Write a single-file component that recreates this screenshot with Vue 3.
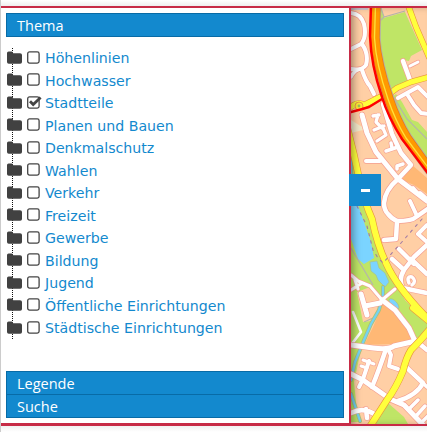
<script setup>
import { ref } from 'vue'

const layers = ref([
  'Höhenlinien', 'Hochwasser', 'Stadtteile', 'Planen und Bauen', 'Denkmalschutz',
  'Wahlen', 'Verkehr', 'Freizeit', 'Gewerbe', 'Bildung', 'Jugend',
  'Öffentliche Einrichtungen', 'Städtische Einrichtungen',
].map((name) => ({ name, checked: name === 'Stadtteile' })))

// Residential streets: path and carriageway width
const streets = [
  ['M351 13 Q361 14 364 24 Q367 37 361 44 L351 49', 4],
  ['M362 44 Q369 54 366 65 Q362 71 351 69', 4],
  ['M362 70 Q366 82 370 86 L374 94', 4],
  ['M351 77 Q355 69 361 69', 3.5],
  ['M403 61 L410 80', 4.5],
  ['M410 66 L418 62', 3],
  ['M398 98 L407 93 L418 87 L429 98', 4],
  ['M407 94 L414 105 L421 113 L429 114', 4],
  ['M362 115 L367 133 L376 152 L398 179 L427 201', 5],
  ['M366 161 L380 161', 4],
  ['M373 116 L379 115 M378 115 L376 122 L382 128 M374 130 L384 126 M382 126 L386 135 L377 141', 3.3],
  ['M383 104 L392 134 L401 153 L411 165 L398 179 Q385 190 384 203 Q384 210 388 214 Q392 219 397 221 L396 239 L384 240', 4.5],
  ['M386 151 L398 147 M391 143 L392 148 M397 169 V166 L403 164', 3.5],
  ['M397 221 Q412 221 416 217 L429 208', 4.5],
  ['M417 216 L410 201 M417 193 L413 188 M420 193 L429 201 M427 225 L418 234 L427 242', 4],
  ['M399 249 L414 264 M392 259 L404 270 L414 257 L427 245 M411 259 L427 274 M404 270 Q398 280 403 288 L427 293', 4.5],
  ['M409 283 Q406 276 412 277 Q417 281 412 285', 3.5],
  ['M382 300 L395 310 L409 328 L414 339', 5],
  ['M351 275 L358 281 L370 286 L382 300 L395 289', 3],
  ['M351 290 L362 283 M355 280 L358 289', 3],
  ['M361 294 L367 315 M365 306 L380 303', 5],
  ['M351 345 L373 348 Q389 350 394 346 L416 341', 5],
  ['M386 349 Q379 370 372 387', 4.5],
  ['M388 349 L391 355 L389 366 L398 369', 4],
  ['M416 341 L427 350', 4.5],
  ['M351 374 L363 380 L390 399 L404 405 L427 429', 5],
  ['M398 401 Q417 395 423 383 L406 367', 4.5],
  ['M423 383 L427 387 M409 409 L418 400 M416 416 L425 406 M422 422 L429 415', 3.5],
  ['M369 361 L363 379 L359 387', 4],
  ['M361 366 L367 368 M363 360 L374 364', 3],
  ['M351 413 Q364 406 377 416 M366 409 L367 418', 4.5],
]

// Footways through the green belt
const footways = 'M353 312 L361 332 L351 345'

const yellowRoads = [
  ['M408 5 L416 27 L429 57', 5],
  ['M384 98 L397 88 L411 82 L429 77', 5],
  ['M351 107 Q358 101 364 105 L380 97', 5],
  ['M347 127 Q354 153 359 178 Q364 201 372 219 Q377 244 386 263 Q397 288 429 320', 6],
  ['M413 308 L429 321 M429 330 Q421 340 411 350 Q406 358 403 371 Q396 388 387 400 L369 428', 6],
]

const toggle = (layer) => { layer.checked = !layer.checked }
</script>

<template>
  <main class="viewer">
    <div class="strip" />
    <div class="frame">
      <section class="panel">
        <h2 class="bar">Thema</h2>
        <ul class="tree">
          <li v-for="layer in layers" :key="layer.name" class="row" @click="toggle(layer)">
            <svg class="folder" viewBox="0 0 15 13">
              <path d="M0 2Q0 .4 1.6 .4H4.6Q6 .4 6.2 2.2H13Q15 2.2 15 4V11Q15 12.7 13.2 12.7H1.8Q0 12.7 0 11Z" />
            </svg>
            <svg class="check" viewBox="0 0 15 13">
              <rect x=".7" y=".9" width="11.4" height="11.2" rx="1.8" />
              <path v-if="layer.checked" d="M3 5.2 6.2 8.5 13.6 1.5" />
            </svg>
            <span>{{ layer.name }}</span>
          </li>
        </ul>
        <div class="lower">
          <h2 class="bar">Legende</h2>
          <h2 class="bar">Suche</h2>
        </div>
      </section>
      <section class="map">
        <svg class="canvas" viewBox="351 8 76 416">
          <rect x="351" y="8" width="76" height="416" fill="#ffcfa5" />
          <path d="M351 8H368V10H351Z" fill="#cfc5cc" />
          <g fill="#bfe566">
            <path d="M379 8H381L384 17L380 23Z" />
            <path d="M380 19L405 12L422 50L411 56L409 61L402 60L411 82L390 92L379 60Z" />
            <path d="M391 98L396 94L402 102L412 120L418 122L427 132V158L407 138L396 117Z" />
            <path d="M351 143L357 168L364 202L374 228L382 260L405 300L427 322V333L415 339L400 319L386 301L372 320L362 345L354 382L358 422H351Z" />
            <path d="M398 312H427V330L415 339L406 326Z" />
            <path d="M388 403L404 417L408 424H373Z" />
          </g>
          <path d="M351 120L362 127L363 130L351 133Z" fill="#f2e8c8" />
          <path d="M357 292L370 287L382 301L378 312L371 321L363 322Z" fill="#ffcfa5" />
          <path d="M411 164L427 178V194L414 185L402 180Z M383 303L393 311L410 330L414 339L394 344L364 345L373 327Z" fill="#ffb875" />
          <path d="M351 206L358 205L364 222L371 242L374 258L364 264L358 259L351 239Z" fill="#7bd4ff" />
          <g fill="#7bd4ff" stroke="#a9bd88" stroke-width=".6">
            <path d="M370 262L377 261L379 268L385 273L389 282L385 287L378 280L376 275L371 271Z" />
            <ellipse cx="394" cy="304" rx="3" ry="6.5" transform="rotate(-42 394 304)" />
          </g>
          <g fill="none" stroke="#b5b5aa" stroke-width="1.2">
            <path d="M405 11L384 17L381 8M384 17L380 21V44L384 68L393 96L407 119L427 139M351 248L373 285M364 322L373 318" />
          </g>
          <path class="line brook-edge" d="M383 287V295L379 310L371 324L364 340L355 362L351 380M351 394L360 421M351 160V183" />
          <path class="line brook" d="M383 287V295L379 310L371 324L364 340L355 362L351 380M351 394L360 421M351 160V183" />
          <path class="line surface" :d="footways" stroke-width="2.6" />
          <g class="line casing">
            <path v-for="([d, width], i) in streets" :key="i" :d="d" :stroke-width="width + 1.3" />
          </g>
          <g class="line surface">
            <path v-for="([d, width], i) in streets" :key="i" :d="d" :stroke-width="width" />
          </g>
          <g class="line yellow-casing">
            <path v-for="([d, width], i) in yellowRoads" :key="i" :d="d" :stroke-width="width + 1.2" />
          </g>
          <g class="line yellow">
            <path v-for="([d, width], i) in yellowRoads" :key="i" :d="d" :stroke-width="width" />
          </g>
          <circle cx="359" cy="106" r="4" fill="#ffec38" stroke="#ef9a49" />
          <circle cx="359" cy="106" r="1.4" fill="#a4bf55" />
          <path class="line" d="M376 5L375 38Q377 64 389 99Q396 120 407 138L430 170" stroke="#b7b1a3" stroke-width="11" />
          <path class="line" d="M376 5L375 38Q377 64 389 99Q396 120 407 138L430 170" stroke="#e77b16" stroke-width="9.4" />
          <path class="line" d="M376 5L375 38Q377 64 389 99Q396 120 407 138L430 170" stroke="#ff9900" stroke-width="8" />
          <path class="line" d="M375.5 5L374.5 38Q376 64 388 99Q395 120 406 138L430 170" stroke="#ffe13a" stroke-width="1.3" />
          <path class="line" d="M371 5L370 36Q371 65 382 97Q388 117 402 139L430 176M351 112Q363 109 369 107L382 99" stroke="#f00" stroke-width="2.5" />
          <path class="line" d="M357 206L367 226L373 250L378 258L383 263L401 243L422 219M351 183L357 204" stroke="#a27ba5" stroke-width="1.1" stroke-dasharray="2.5 5" />
        </svg>
        <button class="zoom-out" aria-label="−"><i /></button>
      </section>
    </div>
    <div class="foot" />
  </main>
</template>

<style>
body { margin: 0; background: #fff; }
</style>

<style scoped>
.viewer {
  box-sizing: border-box;
  width: 427px;
  height: 432px;
  border-left: 1px solid #ccc;
  display: flex;
  flex-direction: column;
  overflow: hidden;
  background: #fff;
}
.strip {
  height: 6px;
  flex: none;
  background: linear-gradient(#fff, #eee);
}
.frame {
  height: 420px;
  box-sizing: border-box;
  display: flex;
  border-top: 2px solid #c72b46;
  border-bottom: 2px solid #c72b46;
}
.foot {
  height: 6px;
  background: linear-gradient(#f1f1f1, #fff);
}
.panel {
  box-sizing: border-box;
  width: 350px;
  padding: 5px 5px 5px;
  border-right: 2px solid #c72b46;
  border-bottom: 1px solid #c72b46;
  display: flex;
  flex-direction: column;
}
.bar {
  box-sizing: border-box;
  flex: none;
  height: 24px;
  margin: 0;
  padding-left: 10px;
  border: 1px solid #086ba6;
  background: #1389ce;
  color: #fff;
  font: 400 14.5px/23px "Open Sans", sans-serif;
}
.tree {
  list-style: none;
  margin: 11px 0 0;
  padding: 0;
  height: 292px;
  background: repeating-linear-gradient(#111 0 1px, transparent 1px 2px) 6px 0 / 1px 100% no-repeat;
}
.row {
  display: flex;
  align-items: flex-start;
  height: 22.5px;
  padding-left: 1px;
  box-sizing: border-box;
  color: #1389ce;
  font: 14.16px/20px "DejaVu Sans", sans-serif;
  white-space: nowrap;
  cursor: pointer;
}
.folder { width: 15px; height: 13px; margin: 2.5px 5px 0 0; fill: #414141; }
.check { width: 15px; height: 13px; margin: 2.5px 3px 0 0; fill: #fff; stroke: #444; stroke-width: 1.3; }
.check path { fill: none; stroke-width: 2.8; }
.lower { margin-top: auto; }
.lower .bar + .bar { margin-top: -1px; }
.map {
  position: relative;
  width: 76px;
  height: 416px;
}
.map::after {
  content: "";
  position: absolute;
  inset: 0;
  box-shadow: inset 5px 0 8px -3px #0006;
  pointer-events: none;
}
.canvas { display: block; width: 76px; height: 416px; }
.line { fill: none; stroke-linecap: round; stroke-linejoin: round; }
.casing { stroke: #f49f91; }
.surface { stroke: #fff; }
.yellow-casing { stroke: #e9963d; }
.yellow { stroke: #ffff3c; }
.brook-edge { stroke: #abc27b; stroke-width: 4; }
.brook { stroke: #73d3f4; stroke-width: 2.2; }
.zoom-out {
  position: absolute;
  z-index: 1;
  left: -2px;
  top: 166px;
  width: 32px;
  height: 32px;
  padding: 0;
  border: 0;
  background: #1389ce;
  display: grid;
  place-items: center;
}
.zoom-out i { width: 9px; height: 3px; background: #fff; }
</style>
